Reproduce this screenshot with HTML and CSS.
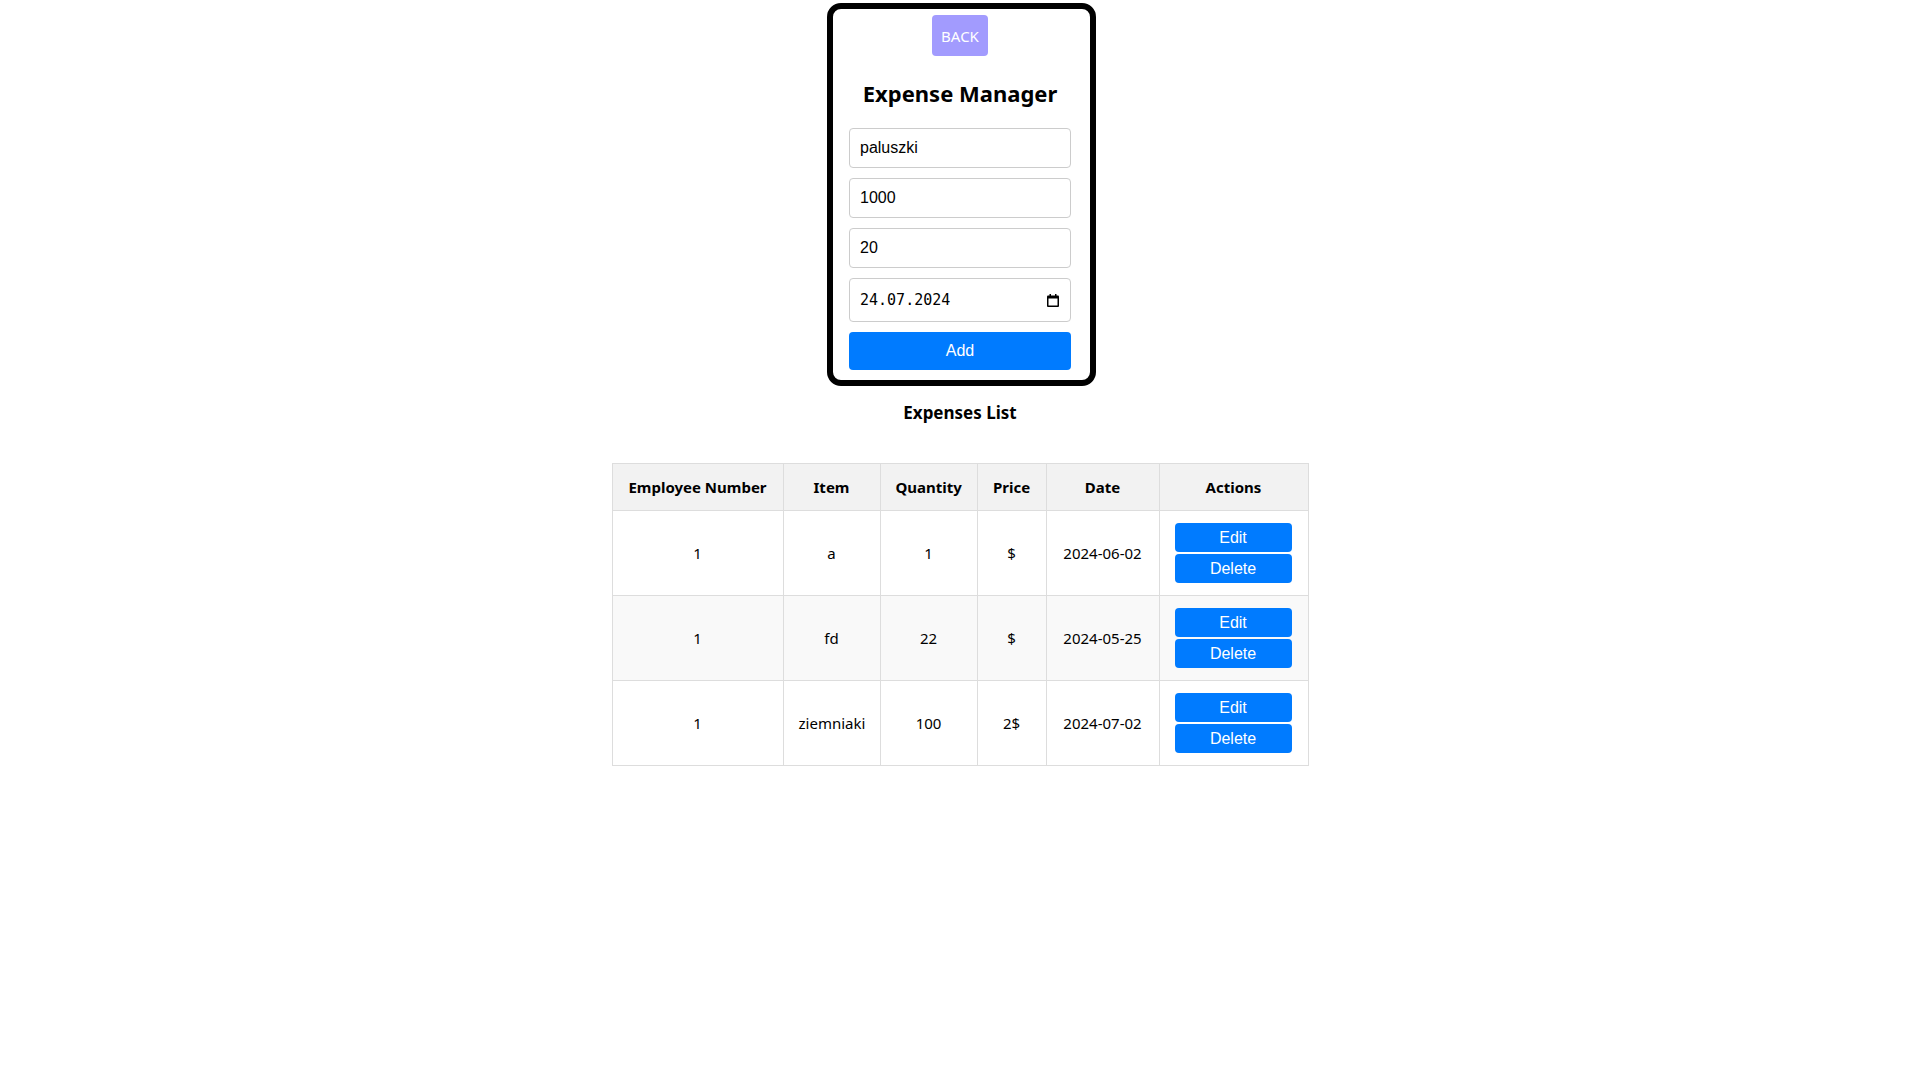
FILE: index.html
```html
<!DOCTYPE html>
<html lang="en">
<head>
    <meta charset="UTF-8">
    <meta name="viewport" content="width=device-width, initial-scale=1.0">
    <title>Expense Manager</title>
    <link rel="stylesheet" href="styles.css">
</head>
<body>
    <div class="container">
        <a href="./home.html" class="back-link">
            <button class="back-btn">BACK</button>
        </a>
        <h2>Expense Manager</h2>
        <form id="expenseForm">
            <input type="text" class="field" value="paluszki" />
            <input type="text" class="field" value="1000" />
            <input type="text" class="field" value="20" />
            <div class="field date-field">
                <input type="text" class="date-input" value="24.07.2024" />
                <svg class="cal-icon" width="12" height="13" viewBox="0 0 12 13">
                    <rect x="0" y="1.5" width="12" height="11.5" rx="1" fill="#000"/>
                    <rect x="1.5" y="4.5" width="9" height="7" fill="#fff"/>
                    <rect x="2.5" y="0" width="1.5" height="3" fill="#000"/>
                    <rect x="8" y="0" width="1.5" height="3" fill="#000"/>
                </svg>
            </div>
            <button type="button" class="add-btn">Add</button>
        </form>
    </div>

    <h3>Expenses List</h3>

    <table class="expenses">
        <thead>
            <tr>
                <th class="col-emp">Employee Number</th>
                <th class="col-item">Item</th>
                <th class="col-qty">Quantity</th>
                <th class="col-price">Price</th>
                <th class="col-date">Date</th>
                <th class="col-actions">Actions</th>
            </tr>
        </thead>
        <tbody>
            <tr>
                <td>1</td>
                <td>a</td>
                <td>1</td>
                <td>$</td>
                <td>2024-06-02</td>
                <td>
                    <button class="edit-btn">Edit</button>
                    <button class="delete-btn">Delete</button>
                </td>
            </tr>
            <tr>
                <td>1</td>
                <td>fd</td>
                <td>22</td>
                <td>$</td>
                <td>2024-05-25</td>
                <td>
                    <button class="edit-btn">Edit</button>
                    <button class="delete-btn">Delete</button>
                </td>
            </tr>
            <tr>
                <td>1</td>
                <td>ziemniaki</td>
                <td>100</td>
                <td>2$</td>
                <td>2024-07-02</td>
                <td>
                    <button class="edit-btn">Edit</button>
                    <button class="delete-btn">Delete</button>
                </td>
            </tr>
        </tbody>
    </table>
</body>
</html>
```

FILE: styles.css
```css
* {
    box-sizing: border-box;
}

body {
    margin: 0;
    padding-top: 3px;
    font-family: 'Noto Sans', sans-serif;
    color: #000;
    background-color: #fff;
}

.container {
    width: 269px;
    margin: 0 0 0 calc(50% - 133px);
    padding: 6px 19px 10px 16px;
    border: 6px solid #000;
    border-radius: 14px;
    text-align: center;
}

.back-link {
    text-decoration: none;
}

.back-btn {
    height: 41px;
    padding: 0 9px;
    border: none;
    border-radius: 4px;
    background-color: #a29bfe;
    color: #fff;
    font-family: 'Noto Sans', sans-serif;
    font-size: 15px;
}

h2 {
    margin: 21px 0 19px;
    font-size: 22px;
    line-height: 32px;
}

.field {
    display: block;
    width: 222px;
    height: 40px;
    margin: 0 0 10px;
    padding: 0 10px;
    border: 1px solid #ccc;
    border-radius: 4px;
    font-family: 'Liberation Sans', Arial, sans-serif;
    font-size: 16px;
    color: #000;
}

.date-field {
    display: flex;
    align-items: center;
    height: 44px;
    margin-bottom: 10px;
}

.date-input {
    flex: 1;
    min-width: 0;
    border: none;
    padding: 0;
    font-family: 'DejaVu Sans Mono', monospace;
    font-size: 15px;
    color: #000;
    outline: none;
}

.cal-icon {
    flex: none;
    margin-right: 1px;
}

.add-btn {
    display: block;
    width: 222px;
    height: 38px;
    border: none;
    border-radius: 4px;
    background-color: #007bff;
    color: #fff;
    font-family: 'Liberation Sans', Arial, sans-serif;
    font-size: 16px;
}

h3 {
    margin: 14px 0 0;
    text-align: center;
    font-size: 17px;
    line-height: 25px;
}

.expenses {
    margin: 38px auto 0;
    border-collapse: collapse;
    table-layout: fixed;
    width: 696px;
}

.expenses th,
.expenses td {
    padding: 12px 15px;
    border: 1px solid #ddd;
    text-align: center;
    font-size: 15px;
}

.expenses th {
    background-color: #f2f2f2;
    line-height: 22px;
}

.expenses tbody tr:nth-child(even) {
    background-color: #f9f9f9;
}

.col-emp { width: 171px; }
.col-item { width: 97px; }
.col-qty { width: 97px; }
.col-price { width: 69px; }
.col-date { width: 113px; }
.col-actions { width: 149px; }

.edit-btn,
.delete-btn {
    display: block;
    width: 117px;
    height: 29px;
    padding: 0;
    border: none;
    border-radius: 4px;
    background-color: #007bff;
    color: #fff;
    font-family: 'Liberation Sans', Arial, sans-serif;
    font-size: 16px;
}

.edit-btn {
    margin-bottom: 2px;
}
```
